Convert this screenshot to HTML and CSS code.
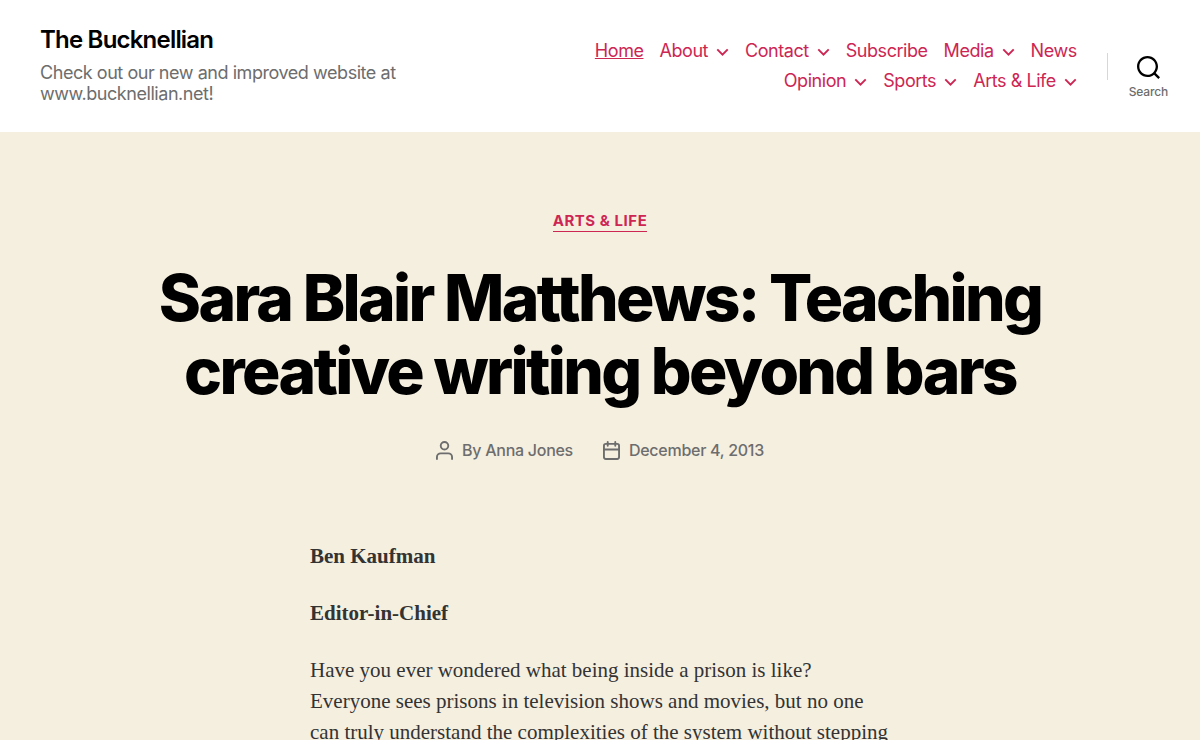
FILE: index.html
```html
<!DOCTYPE html>
<html lang="en">
<head>
    <meta charset="UTF-8">
    <meta name="viewport" content="width=device-width, initial-scale=1.0">
    <title>Sara Blair Matthews: Teaching creative writing beyond bars - The Bucknellian</title>
    <link rel="stylesheet" href="styles.css">
</head>
<body>
    <header class="site-header">
        <div class="header-titles">
            <a class="site-title" href="#">The Bucknellian</a>
            <p class="site-description">Check out our new and improved website at www.bucknellian.net!</p>
        </div>

        <nav class="primary-menu-wrapper" aria-label="Main menu">
            <ul class="primary-menu">
                <li class="current"><a href="#">Home</a></li>
                <li><a href="#">About</a><svg class="chevron" viewBox="0 0 20 12"><path d="M2 2l8 8 8-8"/></svg></li>
                <li><a href="#">Contact</a><svg class="chevron" viewBox="0 0 20 12"><path d="M2 2l8 8 8-8"/></svg></li>
                <li><a href="#">Subscribe</a></li>
                <li><a href="#">Media</a><svg class="chevron" viewBox="0 0 20 12"><path d="M2 2l8 8 8-8"/></svg></li>
                <li><a href="#">News</a></li>
                <li><a href="#">Opinion</a><svg class="chevron" viewBox="0 0 20 12"><path d="M2 2l8 8 8-8"/></svg></li>
                <li><a href="#">Sports</a><svg class="chevron" viewBox="0 0 20 12"><path d="M2 2l8 8 8-8"/></svg></li>
                <li><a href="#">Arts &amp; Life</a><svg class="chevron" viewBox="0 0 20 12"><path d="M2 2l8 8 8-8"/></svg></li>
            </ul>
        </nav>

        <div class="search-wrapper">
            <button class="search-toggle" type="button">
                <svg viewBox="0 0 23 23"><path d="M38.710696,48.0601792 L43,52.3494831 L41.3494831,54 L37.0601792,49.710696 C35.2632422,51.1481185 32.9839107,52.0076499 30.5038249,52.0076499 C24.7027226,52.0076499 20,47.3049272 20,41.5038249 C20,35.7027226 24.7027226,31 30.5038249,31 C36.3049272,31 41.0076499,35.7027226 41.0076499,41.5038249 C41.0076499,43.9839107 40.1481185,46.2632422 38.710696,48.0601792 Z M36.3875844,47.1716785 C37.8030221,45.7026647 38.6734666,43.7048964 38.6734666,41.5038249 C38.6734666,36.9918565 35.0157934,33.3341833 30.5038249,33.3341833 C25.9918565,33.3341833 22.3341833,36.9918565 22.3341833,41.5038249 C22.3341833,46.0157934 25.9918565,49.6734666 30.5038249,49.6734666 C32.7048964,49.6734666 34.7026647,48.8030221 36.1716785,47.3875844 C36.2023931,47.347638 36.2360451,47.3092237 36.2726343,47.2726343 C36.3092237,47.2360451 36.347638,47.2023931 36.3875844,47.1716785 Z" transform="translate(-20 -31)"/></svg>
                <span>Search</span>
            </button>
        </div>
    </header>

    <main>
        <article>
            <header class="entry-header">
                <div class="entry-categories"><a href="#">Arts &amp; Life</a></div>
                <h1 class="entry-title">Sara Blair Matthews: Teaching creative writing beyond bars</h1>
                <ul class="post-meta">
                    <li>
                        <svg viewBox="0 0 18 20"><circle cx="9" cy="5" r="4"/><path d="M1 19v-2a4 4 0 0 1 4-4h8a4 4 0 0 1 4 4v2"/></svg>
                        <span>By <a href="#">Anna Jones</a></span>
                    </li>
                    <li>
                        <svg viewBox="0 0 18 20"><rect x="1" y="3" width="16" height="16" rx="2"/><path d="M1 9h16M5 1v4M13 1v4"/></svg>
                        <a href="#">December 4, 2013</a>
                    </li>
                </ul>
            </header>

            <div class="entry-content">
                <p><strong>Ben Kaufman</strong></p>
                <p><strong>Editor-in-Chief</strong></p>
                <p>Have you ever wondered what being inside a prison is like? Everyone sees prisons in television shows and movies, but no one can truly understand the complexities of the system without stepping</p>
            </div>
        </article>
    </main>
</body>
</html>
```
FILE: styles.css
```css
* {
    box-sizing: border-box;
}
body {
    margin: 0;
    background: #f5efe0;
    color: #000;
    font-family: Inter, "Liberation Sans", sans-serif;
    font-size: 18px;
    letter-spacing: -0.015em;
}
a {
    color: #cd2653;
    text-decoration: none;
}
ul {
    list-style: none;
    margin: 0;
    padding: 0;
}

/* Header */
.site-header {
    display: flex;
    align-items: center;
    background: #fff;
    padding: 28px 32px 28px 40px;
    letter-spacing: -0.025em;
}
.header-titles {
    flex: 0 1 380px;
    margin-right: auto;
}
.site-title {
    display: block;
    color: #000;
    font-size: 24px;
    font-weight: 600;
    line-height: 24px;
    letter-spacing: -0.033em;
}
.site-description {
    margin: 10px 0 0;
    color: #6d6d6d;
    line-height: 21px;
}
.primary-menu-wrapper {
    flex: 0 1 500px;
}
.primary-menu {
    display: flex;
    flex-wrap: wrap;
    justify-content: flex-end;
    gap: 8px 16px;
    line-height: 22px;
}
.primary-menu li {
    display: flex;
    align-items: center;
}
.primary-menu a:hover,
.primary-menu .current a {
    text-decoration: underline;
}
.chevron {
    width: 13px;
    height: 8px;
    margin: 2px 0 0 8px;
    fill: none;
    stroke: #cd2653;
    stroke-width: 3;
}
.search-wrapper {
    display: flex;
    align-items: center;
    margin-left: 30px;
}
.search-wrapper::before {
    content: "";
    width: 1px;
    height: 27px;
    margin-right: 21px;
    background: #dcd7ca;
}
.search-toggle {
    display: flex;
    flex-direction: column;
    align-items: center;
    gap: 6px;
    margin-top: 22px;
    padding: 0;
    border: none;
    background: none;
    color: #6d6d6d;
    font-family: inherit;
    font-size: 12px;
    font-weight: 500;
    line-height: 14px;
    letter-spacing: -0.015em;
    cursor: pointer;
}
.search-toggle svg {
    width: 23px;
    height: 23px;
    fill: #000;
}

/* Post */
.entry-header {
    max-width: 1000px;
    margin: 0 auto;
    padding: 79px 20px 81px;
    text-align: center;
}
.entry-categories {
    font-size: 15px;
    font-weight: 700;
    line-height: 20px;
    letter-spacing: 0.036em;
    text-transform: uppercase;
}
.entry-categories a {
    display: inline-block;
    border-bottom: 1px solid #cd2653;
}
.entry-title {
    margin: 29px 0 33px;
    font-size: 64px;
    font-weight: 800;
    line-height: 73px;
    letter-spacing: -0.0415em;
}
.post-meta {
    display: flex;
    flex-wrap: wrap;
    justify-content: center;
    gap: 8px 30px;
    color: #6d6d6d;
    font-size: 16px;
    font-weight: 500;
    line-height: 20px;
}
.post-meta li {
    display: flex;
    align-items: center;
    gap: 9px;
}
.post-meta a {
    color: inherit;
}
.post-meta svg {
    width: 17px;
    height: 19px;
    fill: none;
    stroke: #6d6d6d;
    stroke-width: 2;
    stroke-linecap: round;
}
.entry-content {
    max-width: 580px;
    margin: 0 auto;
    color: #333;
    font-family: "Liberation Serif", "Times New Roman", serif;
    font-size: 21px;
    line-height: 31px;
    letter-spacing: normal;
}
.entry-content p {
    margin: 0 0 26px;
}
```
